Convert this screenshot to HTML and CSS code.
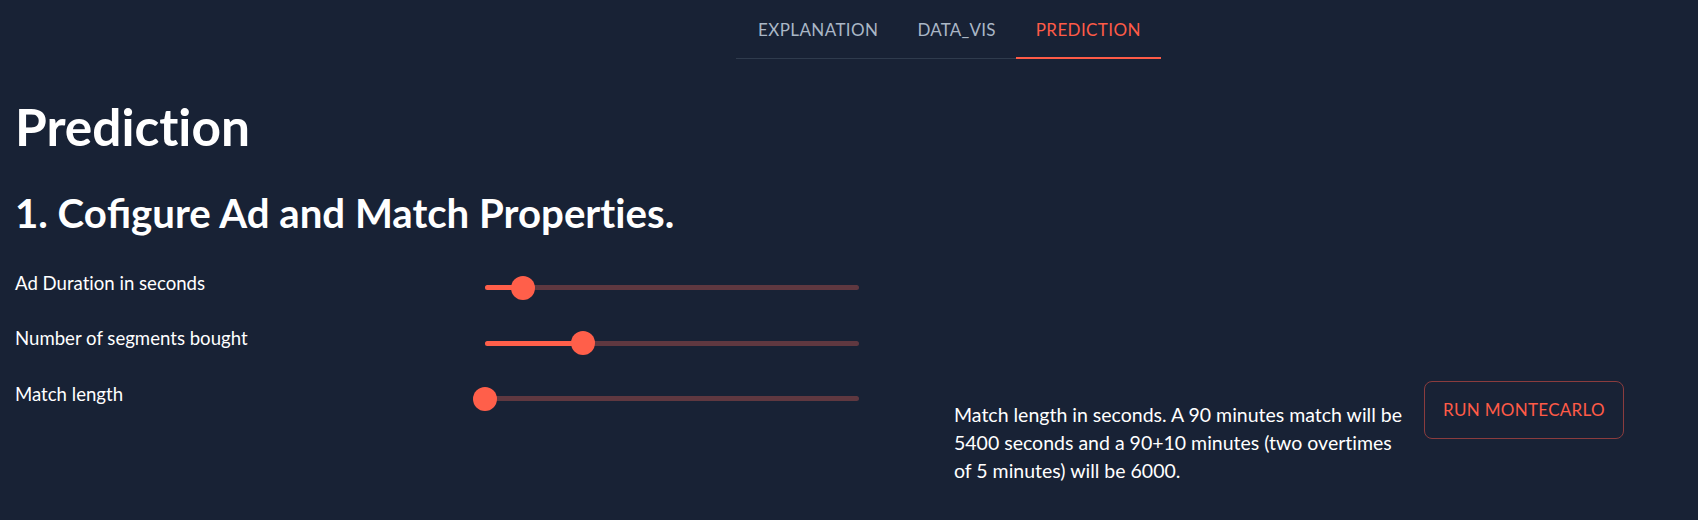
FILE: index.html
```html
<!DOCTYPE html>
<html lang="en">
<head>
<meta charset="utf-8">
<title>Prediction</title>
<link rel="stylesheet" href="styles.css">
</head>
<body>
<nav class="tabs">
  <div class="tab-list">
    <a class="tab">EXPLANATION</a>
    <a class="tab">DATA_VIS</a>
    <a class="tab active">PREDICTION</a>
  </div>
</nav>
<main class="page">
  <h1 class="title">Prediction</h1>
  <h2 class="subtitle">1. Co<span class="lig">fi</span>gure Ad and Match Properties.</h2>
  <div class="row">
    <div class="label">Ad Duration in seconds</div>
    <div class="slider">
      <div class="rail"></div>
      <div class="track" style="width:10.2%"></div>
      <div class="thumb" style="left:10.2%"></div>
    </div>
  </div>
  <div class="row">
    <div class="label">Number of segments bought</div>
    <div class="slider">
      <div class="rail"></div>
      <div class="track" style="width:26.1%"></div>
      <div class="thumb" style="left:26.1%"></div>
    </div>
  </div>
  <div class="row">
    <div class="label">Match length</div>
    <div class="slider">
      <div class="rail"></div>
      <div class="track" style="width:0%"></div>
      <div class="thumb" style="left:0%"></div>
    </div>
    <div class="aside">
      <p class="help">Match length in seconds. A 90 minutes match will be 5400 seconds and a 90+10 minutes (two overtimes of 5 minutes) will be 6000.</p>
      <button class="run">RUN MONTECARLO</button>
    </div>
  </div>
</main>
</body>
</html>
```
FILE: styles.css
```css
* { box-sizing: border-box; }
html, body {
  margin: 0;
  padding: 0;
  min-height: 520px;
  background: #182235;
  color: #ffffff;
  font-family: Lato, "Open Sans", "Liberation Sans", sans-serif;
  font-variant-ligatures: no-common-ligatures;
}
.lig { font-variant-ligatures: common-ligatures; }
.tabs {
  height: 60px;
  padding-left: 736px;
}
.tab-list {
  display: flex;
  width: 425px;
  border-bottom: 1px solid #2f3b4d;
}
.tab {
  height: 59px;
  padding: 2px 20px 0;
  display: flex;
  align-items: center;
  justify-content: center;
  font-size: 17px;
  letter-spacing: 0.4px;
  color: #aab7c6;
  margin-bottom: -1px;
  border-bottom: 2px solid transparent;
}
.tab:first-child { padding-left: 22px; padding-right: 20px; }
.tab:nth-child(2) { letter-spacing: 0.2px; padding-left: 19px; }
.tab.active {
  color: #ff5b47;
  border-bottom-color: #ff5b47;
  flex: 1;
}
.page {
  padding: 0 15px;
}
.title {
  margin: 35.5px 0 0;
  font-size: 51.4px;
  line-height: 60px;
  font-weight: 700;
}
.subtitle {
  margin: 33px 0 0;
  font-size: 40.2px;
  line-height: 47px;
  font-weight: 700;
}
.row {
  display: flex;
  align-items: flex-start;
  min-height: 55.5px;
}
.row:first-of-type { margin-top: 36px; }
.label {
  width: 470px;
  font-size: 18.6px;
  line-height: 22px;
}
.slider {
  position: relative;
  width: 374px;
  height: 24px;
  margin-top: 4px;
}
.rail {
  position: absolute;
  left: 0;
  right: 0;
  top: 9.5px;
  height: 5px;
  border-radius: 3px;
  background: #5f3840;
}
.track {
  position: absolute;
  left: 0;
  top: 9.5px;
  height: 5px;
  border-radius: 3px;
  background: #ff5f4a;
}
.thumb {
  position: absolute;
  top: 0;
  width: 24px;
  height: 24px;
  margin-left: -12px;
  border-radius: 50%;
  background: #ff5f4a;
}
.aside {
  display: flex;
  align-items: flex-start;
  margin-left: 95px;
  margin-top: -2px;
}
.help {
  width: 453px;
  margin: 20px 0 0;
  font-size: 19.5px;
  line-height: 28.3px;
}
.run {
  margin-left: 17px;
  width: 200px;
  height: 58px;
  border: 1px solid #8a3c3e;
  border-radius: 8px;
  background: transparent;
  color: #ff5b47;
  font-family: Lato, "Open Sans", "Liberation Sans", sans-serif;
  font-size: 17px;
  letter-spacing: 0.3px;
  padding: 0;
}
```
